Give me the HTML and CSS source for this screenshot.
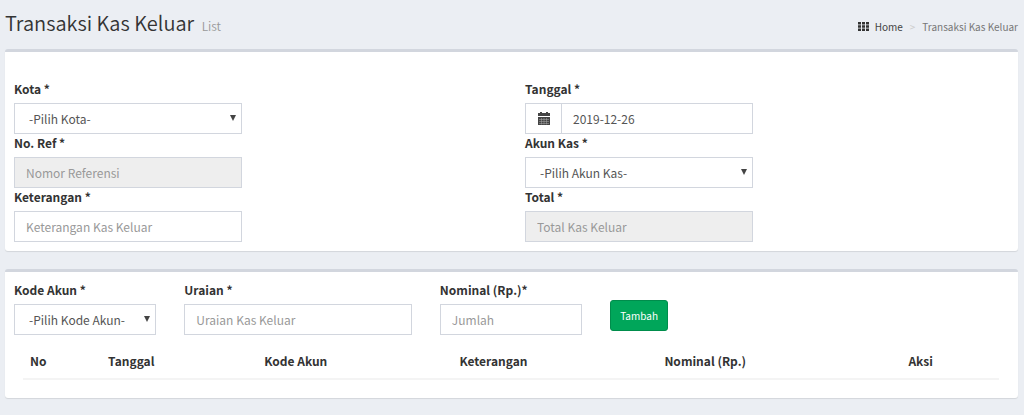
FILE: index.html
```html
<!DOCTYPE html>
<html lang="id">
<head>
  <meta charset="UTF-8" />
  <meta name="viewport" content="width=device-width, initial-scale=1.0" />
  <title>Transaksi Kas Keluar</title>
  <link rel="stylesheet" href="styles.css">
</head>
<body>
  <header class="content-header">
    <h1>Transaksi Kas Keluar <small>List</small></h1>
    <nav class="breadcrumb">
      <a href="#">
        <svg class="icon-grid" viewBox="0 0 11 9" width="11" height="9" aria-hidden="true">
          <path d="M0 0h3v2.500H0zM4 0h3v2.500H4zM8 0h3v2.500H8zM0 3.200h3v2.500H0zM4 3.200h3v2.500H4zM8 3.200h3v2.500H8zM0 6.400h3v2.500H0zM4 6.400h3v2.500H4zM8 6.400h3v2.500H8z"/>
        </svg>
        Home
      </a>
      <span class="separator">&gt;</span>
      <span>Transaksi Kas Keluar</span>
    </nav>
  </header>

  <main>
    <form class="box box-header">
      <div class="row">
        <div class="col-half">
          <label for="kota">Kota *</label>
          <div class="select-wrapper">
            <select id="kota" name="kota">
              <option>-Pilih Kota-</option>
            </select>
          </div>
          <label for="noref">No. Ref *</label>
          <input type="text" id="noref" name="noref" placeholder="Nomor Referensi" readonly>
          <label for="keterangan">Keterangan *</label>
          <input type="text" id="keterangan" name="keterangan" placeholder="Keterangan Kas Keluar">
        </div>
        <div class="col-half">
          <label for="tanggal">Tanggal *</label>
          <div class="input-group">
            <span class="addon">
              <svg viewBox="0 0 12 13" width="12" height="13" aria-hidden="true">
                <path fill="#444" d="M0 1h2V0h2v1h4V0h2v1h2v3H0zM0 5h12v8H0z"/>
                <path stroke="#aaa" stroke-width=".5" d="M1 7.500h10M1 9.500h10M1 11.500h10M3.500 6v6.500M6 6v6.500M8.500 6v6.500"/>
              </svg>
            </span>
            <input type="text" id="tanggal" name="tanggal" value="2019-12-26">
          </div>
          <label for="akunkas">Akun Kas *</label>
          <div class="select-wrapper">
            <select id="akunkas" name="akunkas">
              <option>-Pilih Akun Kas-</option>
            </select>
          </div>
          <label for="total">Total *</label>
          <input type="text" id="total" name="total" placeholder="Total Kas Keluar" readonly>
        </div>
      </div>
    </form>

    <section class="box box-detail">
      <form class="row">
        <div class="col-2">
          <label for="kodeakun">Kode Akun *</label>
          <div class="select-wrapper">
            <select id="kodeakun" name="kodeakun">
              <option>-Pilih Kode Akun-</option>
            </select>
          </div>
        </div>
        <div class="col-3">
          <label for="uraian">Uraian *</label>
          <input type="text" id="uraian" name="uraian" placeholder="Uraian Kas Keluar">
        </div>
        <div class="col-2">
          <label for="nominal">Nominal (Rp.)*</label>
          <input type="text" id="nominal" name="nominal" placeholder="Jumlah">
        </div>
        <div class="col-2 col-button">
          <button type="button">Tambah</button>
        </div>
      </form>

      <div class="table-wrapper">
        <table>
          <thead>
            <tr>
              <th class="w-no">No</th>
              <th class="w-tanggal">Tanggal</th>
              <th class="w-kode">Kode Akun</th>
              <th class="w-keterangan">Keterangan</th>
              <th class="w-nominal">Nominal (Rp.)</th>
              <th class="w-aksi">Aksi</th>
            </tr>
          </thead>
          <tbody></tbody>
        </table>
      </div>
    </section>
  </main>
</body>
</html>
```

FILE: styles.css
```css
* {
  box-sizing: border-box;
}
body {
  font-family: "Source Sans Pro", "Noto Sans CJK SC", sans-serif;
  font-size: 12px;
  line-height: 18px;
  color: #333;
  background: #ebeef3;
  margin: 0;
  padding: 0 6px 0 5px;
}
.content-header {
  display: flex;
  justify-content: space-between;
  align-items: center;
  padding: 9px 0;
}
h1 {
  font-size: 20px;
  font-weight: 350;
  line-height: 28px;
  margin: 0;
}
h1 small {
  font-size: 12px;
  color: #999;
  margin-left: 3px;
}
.breadcrumb {
  display: flex;
  align-items: center;
  gap: 7px;
  font-size: 10px;
  color: #777;
  padding-top: 4px;
}
.breadcrumb a {
  display: flex;
  align-items: center;
  gap: 6px;
  color: #444;
  text-decoration: none;
}
.icon-grid {
  fill: #333;
}
.separator {
  color: #ccc;
}
.box {
  background: #fff;
  border-top: 3px solid #d2d6de;
  border-radius: 3px;
  box-shadow: 0 1px 1px rgba(0,0,0,0.1);
  margin-bottom: 18px;
}
.box-header {
  padding: 28px 10px 9px 9px;
}
.box-detail {
  padding: 9px 10px 9px 9px;
}
.row {
  display: grid;
  grid-template-columns: repeat(12, 1fr);
  column-gap: 28px;
}
.col-half {
  grid-column: span 6;
  display: grid;
  grid-template-columns: repeat(6, 1fr);
  column-gap: 28px;
}
.col-half > * {
  grid-column: 1 / 4;
}
.col-2 {
  grid-column: span 2;
}
.col-3 {
  grid-column: span 3;
}
label {
  display: block;
  font-weight: bold;
  margin-bottom: 5px;
}
input,
select {
  display: block;
  width: 100%;
  height: 31px;
  padding: 0 11px;
  border: 1px solid #d2d6de;
  border-radius: 0;
  background: #fff;
  color: #555;
  font-family: inherit;
  font-size: 12px;
  line-height: 18px;
}
select {
  appearance: none;
  padding: 0 14px;
}
input::placeholder {
  color: #999;
}
input[readonly] {
  background: #eee;
}
.select-wrapper {
  position: relative;
}
.select-wrapper::after {
  content: "";
  position: absolute;
  right: 6px;
  top: 12px;
  border: 3px solid transparent;
  border-top: 6px solid #444;
  border-bottom: 0;
  pointer-events: none;
}
.input-group {
  display: flex;
}
.addon {
  flex: 0 0 36px;
  display: flex;
  align-items: center;
  justify-content: center;
  border: 1px solid #d2d6de;
  border-right: 0;
}
.col-button {
  padding-top: 19px;
}
button {
  height: 31px;
  padding: 0 9px;
  border: 1px solid #008d4c;
  border-radius: 3px;
  background: #00a65a;
  color: #fff;
  font-family: inherit;
  font-size: 10px;
  cursor: pointer;
}
button:hover {
  background: #008d4c;
}
.table-wrapper {
  padding: 9px;
}
table {
  width: 100%;
  table-layout: fixed;
  border-collapse: collapse;
}
th {
  padding: 8px 7px;
  text-align: left;
  border-bottom: 2px solid #f4f4f4;
}
.w-no {
  width: 8%;
}
.w-tanggal {
  width: 16%;
}
.w-kode {
  width: 20%;
}
.w-keterangan {
  width: 21%;
}
.w-nominal {
  width: 25%;
}
.w-aksi {
  width: 10%;
}
```
